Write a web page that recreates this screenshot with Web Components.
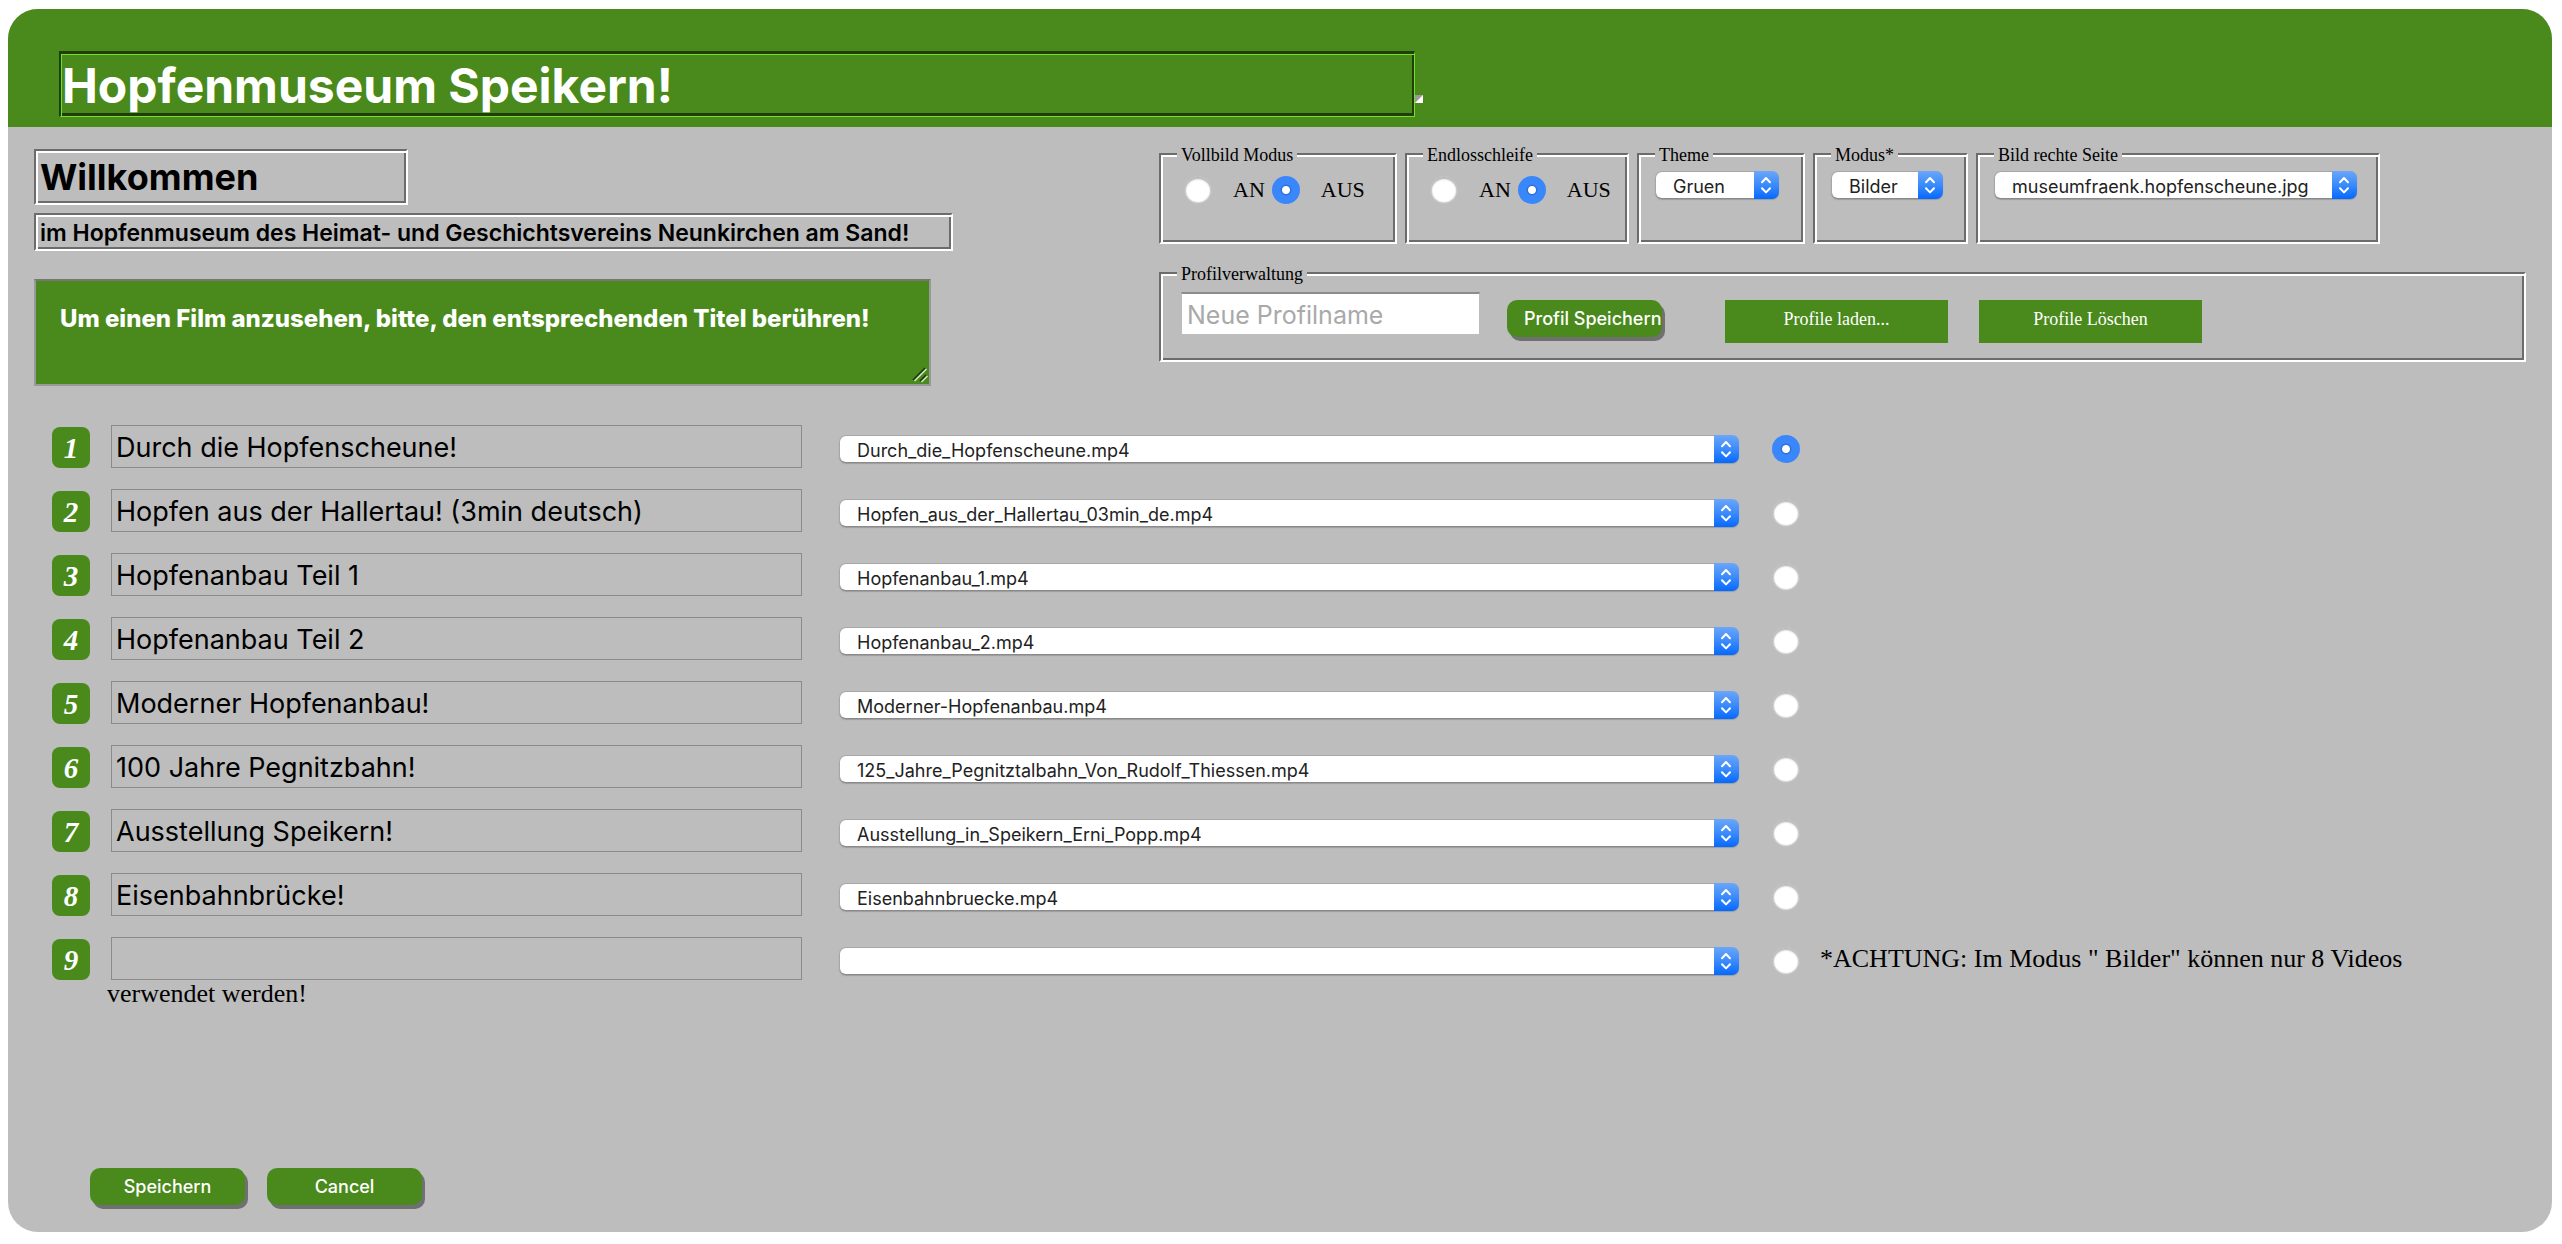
<!DOCTYPE html>
<html lang="de">
<head>
<meta charset="utf-8">
<title>Hopfenmuseum Speikern</title>
<style>
  :root {
    --green: #4a8a1c;
    --gray: #bdbdbd;
    --edge: #6c6c6c;
    --ui: Inter, "Liberation Sans", sans-serif;
    --serif: "Liberation Serif", "Times New Roman", serif;
  }
  body { margin: 9px 10px 12px 8px; background: #fff; color: #000; font-family: var(--serif); }
</style>
</head>
<body>
<museum-app></museum-app>

<script>
const base = `
  *, *::before, *::after { box-sizing: border-box; }
  input, button, textarea, select { margin: 0; font-family: var(--ui); }
  .groove {
    border: 2px solid; border-color: var(--edge) #fff #fff var(--edge);
    box-shadow: inset 2px 2px #fff, inset -2px -2px var(--edge);
    background: transparent; border-radius: 0; outline: none; color: #000;
  }
`;

class Base extends HTMLElement {
  connectedCallback() {
    if (this.shadowRoot) return;
    this.attachShadow({ mode: 'open' }).innerHTML = `<style>${base}</style>${this.view()}`;
    this.ready();
  }
  attr(name) {
    return (this.getAttribute(name) || '').replace(/&/g, '&amp;').replace(/"/g, '&quot;').replace(/</g, '&lt;');
  }
  ready() {}
}

class MacSelect extends Base {
  view() {
    return `<style>
      :host { display: grid; height: 28px; }
      select, .knob { grid-area: 1 / 1; }
      select {
        appearance: none; width: 100%; height: 28px; padding: 3px 25px 0 17px; border: 1px solid #a6a6a6; border-bottom-color: #8a8a8a;
        border-radius: 7px; background: #fff; color: #222; font-size: 18px; line-height: 24px; outline: none;
        box-shadow: 0 1px 1px #9c9c9c;
      }
      .knob {
        justify-self: end; width: 25px; height: 28px; border-radius: 0 7px 7px 0; pointer-events: none;
        background: linear-gradient(#6ba6f9, #3b8bfb 50%, #0568ff);
      }
      svg { display: block; }
    </style>
    <select aria-label="${this.attr('label')}"><option>${this.attr('value')}</option></select>
    <span class="knob"><svg width="25" height="28" viewBox="0 0 25 28" fill="none" stroke="#fff" stroke-width="2" stroke-linecap="round" stroke-linejoin="round"><path d="M8 11.2 12 7l4 4.2M8 17.2l4 4.2 4-4.2"/></svg></span>`;
  }
}
customElements.define('mac-select', MacSelect);

class MacRadio extends Base {
  view() {
    return `<style>
      :host { display: block; }
      label { display: flex; align-items: center; gap: 21px; font-size: 22px; line-height: 28px; }
      input {
        appearance: none; flex: none; width: 28px; height: 28px; border: 1px solid var(--gray); border-radius: 50%;
        background: #fff; box-shadow: inset 0 2px 2px #b4b4b4, inset 0 0 1px 1px #d8d8d8;
      }
      input:checked {
        border: 0; box-shadow: none;
        background: radial-gradient(circle, #fff 3.5px, #2c6fd0 4.5px, #3a87fb 6px);
      }
    </style>
    <label><input type="radio" name="${this.attr('name')}" aria-label="${this.attr('label')}"${this.hasAttribute('checked') ? ' checked' : ''}><slot></slot></label>`;
  }
  ready() {
    this.shadowRoot.querySelector('input').addEventListener('change', () =>
      this.dispatchEvent(new CustomEvent('pick', { bubbles: true, composed: true, detail: this })));
  }
  clear() { this.shadowRoot.querySelector('input').checked = false; }
}
customElements.define('mac-radio', MacRadio);

class SettingBox extends Base {
  view() {
    return `<style>
      :host { display: block; }
      fieldset { height: 100%; margin: 0; padding: 0 16px; min-width: 0; }
      legend { margin-left: 0; padding: 2px 4px 0; background: var(--gray); font-size: 18px; line-height: 22px; }
    </style>
    <fieldset class="groove"><legend>${this.attr('caption')}</legend><slot></slot></fieldset>`;
  }
}
customElements.define('setting-box', SettingBox);

class PushButton extends Base {
  view() {
    return `<style>
      :host { display: block; }
      button { display: block; border: 0; background: var(--green); color: #fff; cursor: pointer; }
      .soft {
        width: 155px; height: 37px; padding: 0 17px 1px; border-radius: 10px; overflow: hidden;
        box-shadow: 3px 4px #707070; font-size: 18px; font-weight: 500; white-space: nowrap;
      }
      .flat { width: 223px; height: 43px; padding: 0 0 4px; font-family: var(--serif); font-size: 18px; }
    </style>
    <button type="button" class="${this.attr('kind')}"><slot></slot></button>`;
  }
}
customElements.define('push-button', PushButton);

class PageHeader extends Base {
  view() {
    return `<style>
      :host { display: grid; grid-template-columns: 1356fr 1137fr; align-items: center; padding: 42px 0 10px 51px; background: var(--green); }
      input {
        width: 100%; height: 66px; padding: 0 1px; border: solid; border-width: 3px 1px 1px 2px;
        border-color: #1f3f08 #74e02c #74e02c #1f3f08; background: none; color: #fff; outline: none;
        box-shadow: inset 1px 1px #74e02c, inset -2px -3px #1f3f08; font-size: 48px; font-weight: 700;
      }
      svg { display: block; margin-top: 30px; }
    </style>
    <input type="text" aria-label="Titel" value="Hopfenmuseum Speikern!">
    <svg width="8" height="8" viewBox="0 0 8 8"><path d="M0 0h8v8H0z" fill="#999"/><path d="M8 0v8H0z" fill="#fff"/></svg>`;
  }
}
customElements.define('page-header', PageHeader);

class WelcomeTexts extends Base {
  view() {
    return `<style>
      :host { display: flex; flex-direction: column; align-items: flex-start; padding-top: 7px; }
      input, .hint { max-width: 100%; }
      .hello { width: 374px; height: 56px; padding: 0 4px; font-size: 36px; font-weight: 700; }
      .sub { width: 919px; height: 38px; margin-top: 8px; padding: 1px 4px 0; font-size: 23px; font-weight: 600; }
      .hint { display: grid; width: 897px; margin-top: 28px; }
      textarea, svg { grid-area: 1 / 1; }
      textarea {
        display: block; width: 100%; height: 107px; padding: 24px; resize: none; overflow: hidden; outline: none;
        border: 2px solid #999; border-top-color: #767676; background: var(--green); color: #fff;
        font-size: 24px; font-weight: 800; line-height: 28px;
      }
      svg { place-self: end; margin: 3px; }
    </style>
    <input class="groove hello" type="text" aria-label="Begrüßung" value="Willkommen">
    <input class="groove sub" type="text" aria-label="Untertitel" value="im Hopfenmuseum des Heimat- und Geschichtsvereins Neunkirchen am Sand!">
    <div class="hint">
      <textarea aria-label="Hinweis">Um einen Film anzusehen, bitte, den entsprechenden Titel berühren!</textarea>
      <svg width="16" height="16" viewBox="0 0 16 16" stroke-width="1.5"><path d="M1 13 13 1M8 14l6-6" stroke="#1d330e"/><path d="M2.500 14 14.500 2M9.500 15l6-6" stroke="#d5e3cb"/></svg>
    </div>`;
  }
}
customElements.define('welcome-texts', WelcomeTexts);

class SettingsPanel extends Base {
  view() {
    return `<style>
      :host { display: flex; flex-direction: column; gap: 17px; }
      .line { display: flex; align-items: stretch; gap: 8px; height: 102px; }
      .switch { display: flex; gap: 7px; padding: 10px 0 0 7px; }
      mac-select { margin-top: 5px; }
      .a { width: 238px; } .b { width: 224px; } .c { width: 168px; } .d { width: 155px; } .e { width: 404px; }
      .c mac-select { width: 124px; } .d mac-select { width: 112px; } .e mac-select { width: 363px; }
      .profile { height: 101px; }
      .tools { display: flex; align-items: flex-start; padding: 7px 0 0 4px; }
      input {
        width: 299px; height: 43px; padding: 1px 5px 0; border: 1px solid var(--gray); border-top: 2px solid #8c8c8c;
        background: #fff; font-size: 25px; outline: none;
      }
      input::placeholder { color: #a9a9a9; opacity: 1; }
      push-button { margin-top: 8px; }
      .save { margin-left: 27px; } .load { margin-left: 63px; } .drop { margin-left: 31px; }
    </style>
    <div class="line">
      <setting-box class="a" caption="Vollbild Modus"><div class="switch"><mac-radio name="full" label="Vollbild AN">AN</mac-radio><mac-radio name="full" label="Vollbild AUS" checked>AUS</mac-radio></div></setting-box>
      <setting-box class="b" caption="Endlosschleife"><div class="switch"><mac-radio name="loop" label="Endlosschleife AN">AN</mac-radio><mac-radio name="loop" label="Endlosschleife AUS" checked>AUS</mac-radio></div></setting-box>
      <setting-box class="c" caption="Theme"><mac-select label="Theme" value="Gruen"></mac-select></setting-box>
      <setting-box class="d" caption="Modus*"><mac-select label="Modus" value="Bilder"></mac-select></setting-box>
      <setting-box class="e" caption="Bild rechte Seite"><mac-select label="Bild rechte Seite" value="museumfraenk.hopfenscheune.jpg"></mac-select></setting-box>
    </div>
    <setting-box class="profile" caption="Profilverwaltung">
      <div class="tools">
        <input type="text" aria-label="Neue Profilname" placeholder="Neue Profilname">
        <push-button class="save" kind="soft">Profil Speichern</push-button>
        <push-button class="load" kind="flat">Profile laden...</push-button>
        <push-button class="drop" kind="flat">Profile Löschen</push-button>
      </div>
    </setting-box>`;
  }
  ready() {
    this.shadowRoot.addEventListener('pick', e => {
      e.detail.parentElement.querySelectorAll('mac-radio').forEach(radio => {
        if (radio !== e.detail) radio.clear();
      });
    });
  }
}
customElements.define('settings-panel', SettingsPanel);

class FilmRow extends Base {
  view() {
    const n = this.attr('number');
    return `<style>
      :host { display: grid; grid-template-columns: 38px 21px 691fr 37px 900fr 33px 28px 20px 706fr; align-items: center; height: 43px; }
      .badge {
        grid-column: 1; align-self: end; height: 41px; border-radius: 8px; background: var(--green); color: #fff;
        font-size: 29px; font-weight: 700; font-style: italic; line-height: 43px; text-align: center;
      }
      input {
        grid-column: 3; width: 100%; min-width: 0; height: 43px; padding: 1px 4px 0; border: 1px solid #8b8b8b;
        background: transparent; color: #000; outline: none; font-size: 27px;
      }
      mac-select { grid-column: 5; margin-top: 5px; }
      mac-radio { grid-column: 7; margin-top: 5px; }
      .note { grid-column: 9; font-size: 26px; line-height: 26px; }
    </style>
    <label class="badge" for="title">${n}</label>
    <input id="title" type="text" value="${this.attr('title-text')}">
    <mac-select label="Datei ${n}" value="${this.attr('file')}"></mac-select>
    <mac-radio name="film" label="Film ${n}"${this.hasAttribute('checked') ? ' checked' : ''}></mac-radio>
    <span class="note"><slot></slot></span>`;
  }
}
customElements.define('film-row', FilmRow);

class FilmList extends Base {
  view() {
    const films = [
      ['Durch die Hopfenscheune!', 'Durch_die_Hopfenscheune.mp4'],
      ['Hopfen aus der Hallertau! (3min deutsch)', 'Hopfen_aus_der_Hallertau_03min_de.mp4'],
      ['Hopfenanbau Teil 1', 'Hopfenanbau_1.mp4'],
      ['Hopfenanbau Teil 2', 'Hopfenanbau_2.mp4'],
      ['Moderner Hopfenanbau!', 'Moderner-Hopfenanbau.mp4'],
      ['100 Jahre Pegnitzbahn!', '125_Jahre_Pegnitztalbahn_Von_Rudolf_Thiessen.mp4'],
      ['Ausstellung Speikern!', 'Ausstellung_in_Speikern_Erni_Popp.mp4'],
      ['Eisenbahnbrücke!', 'Eisenbahnbruecke.mp4'],
      ['', '']
    ];
    return `<style>
      :host { display: block; padding: 0 26px 0 44px; }
      .rows { display: grid; gap: 21px; }
      p { margin: 0 0 0 55px; font-size: 26px; line-height: 28px; }
    </style>
    <div class="rows">${films.map(([t, f], i) => `<film-row number="${i + 1}" title-text="${t}" file="${f}"${i ? '' : ' checked'}>${i === 8 ? '*ACHTUNG: Im Modus " Bilder" können nur 8 Videos' : ''}</film-row>`).join('')}</div>
    <p>verwendet werden!</p>`;
  }
  ready() {
    this.shadowRoot.addEventListener('pick', e => {
      this.shadowRoot.querySelectorAll('film-row').forEach(row => {
        const radio = row.shadowRoot.querySelector('mac-radio');
        if (radio !== e.detail) radio.clear();
      });
    });
  }
}
customElements.define('film-list', FilmList);

class MuseumApp extends Base {
  view() {
    return `<style>
      :host { display: flex; flex-direction: column; min-height: calc(100vh - 21px); border-radius: 30px; overflow: hidden; background: var(--gray); }
      .top { display: grid; grid-template-columns: 1125fr 1367fr; padding: 15px 26px 39px; }
      footer { display: flex; gap: 22px; margin-top: auto; padding: 40px 82px 27px; }
    </style>
    <page-header></page-header>
    <div class="top"><welcome-texts></welcome-texts><settings-panel></settings-panel></div>
    <film-list></film-list>
    <footer><push-button kind="soft">Speichern</push-button><push-button kind="soft">Cancel</push-button></footer>`;
  }
}
customElements.define('museum-app', MuseumApp);
</script>
</body>
</html>
